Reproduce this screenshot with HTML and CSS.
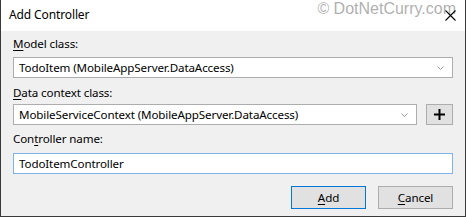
FILE: index.html
```html
<!DOCTYPE html>
<html>
<head>
<meta charset="utf-8">
<link rel="stylesheet" href="styles.css">
</head>
<body>
<div class="window">
  <div class="titlebar">
    <span class="title">Add Controller</span>
    <span class="watermark">© DotNetCurry.com</span>
    <svg class="close" width="11" height="11" viewBox="0 0 11 11"><path d="M0.5 0.5 L10.5 10.5 M10.5 0.5 L0.5 10.5" stroke="#000" stroke-width="1.1" fill="none"/></svg>
  </div>
  <div class="content">
    <div class="label l1"><u>M</u>odel class:</div>
    <div class="combo c1">
      <span class="value">TodoItem (MobileAppServer.DataAccess)</span>
      <svg class="chev" width="7" height="4" viewBox="0 0 7 4"><path d="M0.5 0.5 L3.5 3.5 L6.5 0.5" stroke="#999" stroke-width="1" fill="none"/></svg>
    </div>
    <div class="label l2"><u>D</u>ata context class:</div>
    <div class="row">
      <div class="combo c2">
        <span class="value">MobileServiceContext (MobileAppServer.DataAccess)</span>
        <svg class="chev" width="7" height="4" viewBox="0 0 7 4"><path d="M0.5 0.5 L3.5 3.5 L6.5 0.5" stroke="#999" stroke-width="1" fill="none"/></svg>
      </div>
      <div class="plus">
        <svg width="11" height="11" viewBox="0 0 11 11"><path d="M5.5 0 V11 M0 5.5 H11" stroke="#000" stroke-width="2" fill="none"/></svg>
      </div>
    </div>
    <div class="label l3">Con<u>t</u>roller name:</div>
    <div class="textbox">TodoItemController</div>
    <div class="buttons">
      <div class="btn default"><u>A</u>dd</div>
      <div class="btn"><u>C</u>ancel</div>
    </div>
  </div>
</div>
</body>
</html>
```

FILE: styles.css
```css
html, body {
  margin: 0;
  padding: 0;
  background: #f0f0f0;
}
.window {
  width: 466px;
  height: 217px;
  box-sizing: border-box;
  border-left: 1px solid #3a3a3a;
  border-right: 1px solid #3a3a3a;
  border-bottom: 1px solid #3a3a3a;
  background: #f0f0f0;
  font-family: "Noto Sans", sans-serif;
  font-size: 11.6px;
  letter-spacing: -0.12px;
  color: #000;
  display: flex;
  flex-direction: column;
}
.titlebar {
  position: relative;
  height: 31px;
  background: #fff;
  display: flex;
  align-items: center;
  padding-left: 8px;
  flex: none;
}
.title {
  font-size: 12px;
  line-height: 16px;
  margin-top: -1px;
}
.watermark {
  position: absolute;
  right: 9px;
  top: 0;
  font-family: "Liberation Sans", Arial, sans-serif;
  font-size: 16px;
  letter-spacing: 0;
  line-height: 18px;
  color: rgba(120, 120, 120, 0.6);
}
.close {
  position: absolute;
  left: 444px;
  top: 10px;
}
.content {
  display: flex;
  flex-direction: column;
  padding: 0 12px;
}
.label {
  line-height: 16px;
  height: 16px;
}
.l1 { margin-top: 5px; }
.l2 { margin-top: 7px; }
.l3 { margin-top: 6px; }
u { text-decoration-thickness: 1px; text-underline-offset: 2px; }
.combo {
  height: 21px;
  box-sizing: border-box;
  border: 1px solid #adadad;
  background: #fff;
  display: flex;
  align-items: center;
  justify-content: space-between;
  padding: 0 8px 0 5px;
}
.c1 { margin-top: 5px; }
.row {
  display: flex;
  gap: 9px;
  margin-top: 3px;
}
.c2 { flex: 1; }
.plus {
  width: 27px;
  height: 21px;
  box-sizing: border-box;
  border: 1px solid #adadad;
  background: #e1e1e1;
  display: flex;
  align-items: center;
  justify-content: center;
}
.value { line-height: 16px; white-space: nowrap; }
.textbox {
  margin-top: 6px;
  height: 21px;
  box-sizing: border-box;
  border: 1px solid #7eb4ea;
  background: #fff;
  padding: 0 5px;
  line-height: 19px;
}
.buttons {
  display: flex;
  justify-content: flex-end;
  gap: 12px;
  margin-top: 12px;
}
.btn {
  width: 75px;
  height: 23px;
  box-sizing: border-box;
  border: 1px solid #adadad;
  background: #e1e1e1;
  display: flex;
  align-items: center;
  justify-content: center;
  line-height: 16px;
}
.btn.default {
  border-color: #0078d7;
}
```
